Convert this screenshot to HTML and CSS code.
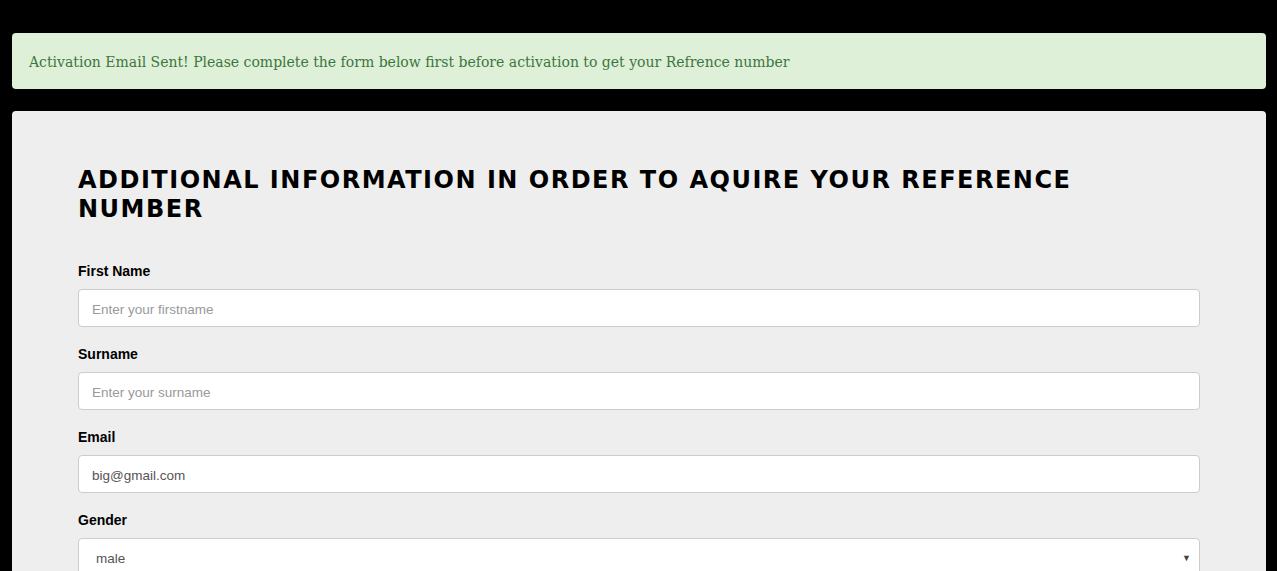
FILE: index.html
```html
<!DOCTYPE html>
<html>
<head>
<meta charset="utf-8">
<link rel="stylesheet" href="styles.css">
</head>
<body>
<div class="page">
  <div class="alert">Activation Email Sent! Please complete the form below first before activation to get your Refrence number</div>
  <div class="card">
    <h2 class="title">Additional information in order to aquire your reference number</h2>
    <div class="field">
      <label class="label">First Name</label>
      <div class="input placeholder">Enter your firstname</div>
    </div>
    <div class="field">
      <label class="label">Surname</label>
      <div class="input placeholder">Enter your surname</div>
    </div>
    <div class="field">
      <label class="label">Email</label>
      <div class="input value">big@gmail.com</div>
    </div>
    <div class="field">
      <label class="label">Gender</label>
      <div class="input select value"><span>male</span><span class="caret">▼</span></div>
    </div>
  </div>
</div>
</body>
</html>
```
FILE: styles.css
```css
html, body {
  margin: 0;
  padding: 0;
  background: #000;
  height: 571px;
  overflow: hidden;
}
.page {
  padding: 33px 11px 0 12px;
  display: flex;
  flex-direction: column;
  gap: 22px;
}
.alert {
  background: #dff0d8;
  color: #3c763d;
  border-radius: 4px;
  height: 56px;
  box-sizing: border-box;
  padding: 2px 17px 0 17px;
  display: flex;
  align-items: center;
  font-family: "DejaVu Serif", "Liberation Serif", serif;
  font-size: 14px;
}
.card {
  background: #eeeeee;
  border-radius: 4px;
  padding: 55px 66px 0 66px;
  height: 600px;
}
.title {
  margin: 0 0 37px 0;
  font-family: "DejaVu Sans", sans-serif;
  font-weight: bold;
  text-transform: uppercase;
  font-size: 24px;
  line-height: 29px;
  letter-spacing: 1.5px;
  color: #000;
}
.field {
  display: flex;
  flex-direction: column;
  margin-bottom: 10px;
}
.label {
  font-family: "Liberation Sans", Arial, sans-serif;
  font-weight: bold;
  font-size: 14px;
  line-height: 20px;
  color: #000;
  margin-bottom: 8px;
}
.input {
  height: 38px;
  box-sizing: border-box;
  background: #fff;
  border: 1px solid #ccc;
  border-radius: 4px;
  padding: 2px 13px 0 13px;
  display: flex;
  align-items: center;
  font-family: "Liberation Sans", Arial, sans-serif;
  font-size: 13.5px;
  margin-bottom: 7px;
}
.placeholder { color: #999; }
.value { color: #555; }
.select {
  justify-content: space-between;
  padding: 2px 8px 0 17px;
}
.caret {
  font-size: 9px;
  color: #444;
}
```
